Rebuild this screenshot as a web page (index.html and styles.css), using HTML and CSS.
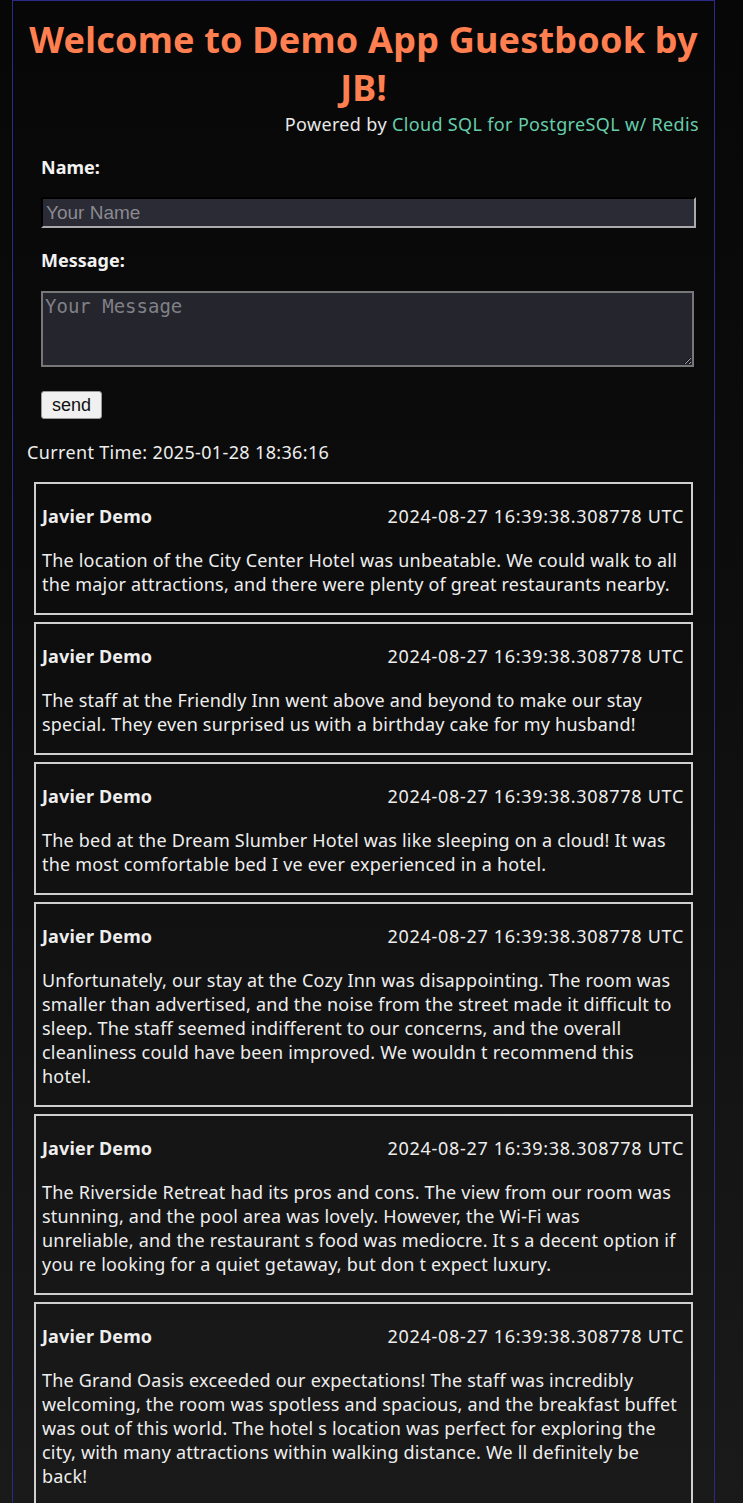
FILE: index.html
```html
<!DOCTYPE html>
<html lang="en">
<head>
<meta charset="utf-8">
<title>Guestbook</title>
<link rel="stylesheet" href="styles.css">
</head>
<body>
<div class="page">
  <header class="head">
    <h1 class="title">Welcome to Demo App Guestbook by JB!</h1>
    <p class="powered">Powered by <a class="link" href="#">Cloud SQL for PostgreSQL w/ Redis</a></p>
  </header>
  <form class="form">
    <label class="label" for="name">Name:</label>
    <input class="input" id="name" type="text" placeholder="Your Name">
    <label class="label" for="msg">Message:</label>
    <textarea class="textarea" id="msg" placeholder="Your Message"></textarea>
    <button class="send" type="button">send</button>
  </form>
  <p class="time">Current Time: 2025-01-28 18:36:16</p>
  <div class="entries">
    <div class="card">
      <div class="card-head"><span class="author">Javier Demo</span><span class="date">2024-08-27 16:39:38.308778 UTC</span></div>
      <p class="msg">The location of the City Center Hotel was unbeatable. We could walk to all the major attractions, and there were plenty of great restaurants nearby.</p>
    </div>
    <div class="card">
      <div class="card-head"><span class="author">Javier Demo</span><span class="date">2024-08-27 16:39:38.308778 UTC</span></div>
      <p class="msg">The staff at the Friendly Inn went above and beyond to make our stay special. They even surprised us with a birthday cake for my husband!</p>
    </div>
    <div class="card">
      <div class="card-head"><span class="author">Javier Demo</span><span class="date">2024-08-27 16:39:38.308778 UTC</span></div>
      <p class="msg">The bed at the Dream Slumber Hotel was like sleeping on a cloud! It was the most comfortable bed I ve ever experienced in a hotel.</p>
    </div>
    <div class="card">
      <div class="card-head"><span class="author">Javier Demo</span><span class="date">2024-08-27 16:39:38.308778 UTC</span></div>
      <p class="msg">Unfortunately, our stay at the Cozy Inn was disappointing. The room was smaller than advertised, and the noise from the street made it difficult to sleep. The staff seemed indifferent to our concerns, and the overall cleanliness could have been improved. We wouldn t recommend this hotel.</p>
    </div>
    <div class="card">
      <div class="card-head"><span class="author">Javier Demo</span><span class="date">2024-08-27 16:39:38.308778 UTC</span></div>
      <p class="msg">The Riverside Retreat had its pros and cons. The view from our room was stunning, and the pool area was lovely. However, the Wi-Fi was unreliable,&nbsp;and the restaurant s food was mediocre. It s a decent option if you re looking for a quiet getaway, but don t expect luxury.</p>
    </div>
    <div class="card">
      <div class="card-head"><span class="author">Javier Demo</span><span class="date">2024-08-27 16:39:38.308778 UTC</span></div>
      <p class="msg">The Grand Oasis exceeded our expectations! The staff was incredibly welcoming, the room was spotless and spacious, and the breakfast buffet was out of this world. The hotel s location was perfect for exploring the city, with many attractions within walking distance. We ll definitely be back!</p>
    </div>
  </div>
</div>
</body>
</html>
```
FILE: styles.css
```css
html, body {
  margin: 0;
  padding: 0;
}
body {
  background: linear-gradient(to bottom, #070707 0%, #0d0d0d 40%, #1a1a1a 100%);
  min-height: 1503px;
  font-family: "Noto Sans", "DejaVu Sans", sans-serif;
  font-size: 18px;
  line-height: 24px;
  color: #eeeeee;
}
.page {
  width: 703px;
  margin-left: 12px;
  border-left: 1px solid #2b2a86;
  border-right: 1px solid #2b2a86;
  border-top: 1px solid #2b2a86;
  min-height: 1502px;
  box-sizing: border-box;
}
.head {
  padding: 15px 15px 0 15px;
}
.title {
  margin: 0;
  text-align: center;
  color: #ff7f50;
  font-size: 36px;
  line-height: 48px;
  font-weight: 700;
  letter-spacing: 0.2px;
}
.powered {
  margin: 0;
  text-align: right;
  color: #e8e8e8;
  letter-spacing: 0.35px;
}
.link {
  color: #66cdaa;
  text-decoration: none;
}
.form {
  display: flex;
  flex-direction: column;
  align-items: flex-start;
  padding: 19px 18px 0 28px;
}
.label {
  font-weight: 700;
  color: #f2f2f2;
}
.input {
  box-sizing: border-box;
  width: 100%;
  height: 31px;
  margin: 18px 0 20px;
  padding: 0 3px;
  background: #2a2b34;
  border: 2px inset #aaaaaa;
  border-top-color: #3a3a40;
  border-left-color: #3a3a40;
  font-family: "Liberation Sans", Arial, sans-serif;
  font-size: 19px;
  color: #dddddd;
}
.input::placeholder {
  color: #8a8a90;
}
.textarea {
  box-sizing: border-box;
  width: 653px;
  height: 76px;
  margin: 19px 0 24px;
  padding: 2px 2px;
  background: #25252e;
  border: 2px solid #777777;
  font-family: "DejaVu Sans Mono", monospace;
  font-size: 19px;
  color: #dddddd;
  resize: vertical;
}
.textarea::placeholder {
  color: #808086;
}
.send {
  box-sizing: border-box;
  width: 61px;
  height: 28px;
  padding: 0;
  background: #f0f0f0;
  border: 1px solid #9a9a9a;
  border-radius: 3px;
  font-family: "Liberation Sans", Arial, sans-serif;
  font-size: 18px;
  color: #111111;
}
.time {
  margin: 21px 0 18px 14px;
  letter-spacing: 0.35px;
}
.entries {
  display: flex;
  flex-direction: column;
  gap: 7px;
  padding: 0 21px 0 21px;
}
.card {
  border: 2px solid #cfcfcf;
  padding: 20px 7px 17px 6px;
}
.card-head {
  display: flex;
  justify-content: space-between;
  margin-bottom: 20px;
}
.author {
  font-weight: 700;
  letter-spacing: 0.15px;
}
.date {
  letter-spacing: 0.7px;
}
.msg {
  margin: 0 1px 0 0;
  letter-spacing: 0.2px;
}
```
